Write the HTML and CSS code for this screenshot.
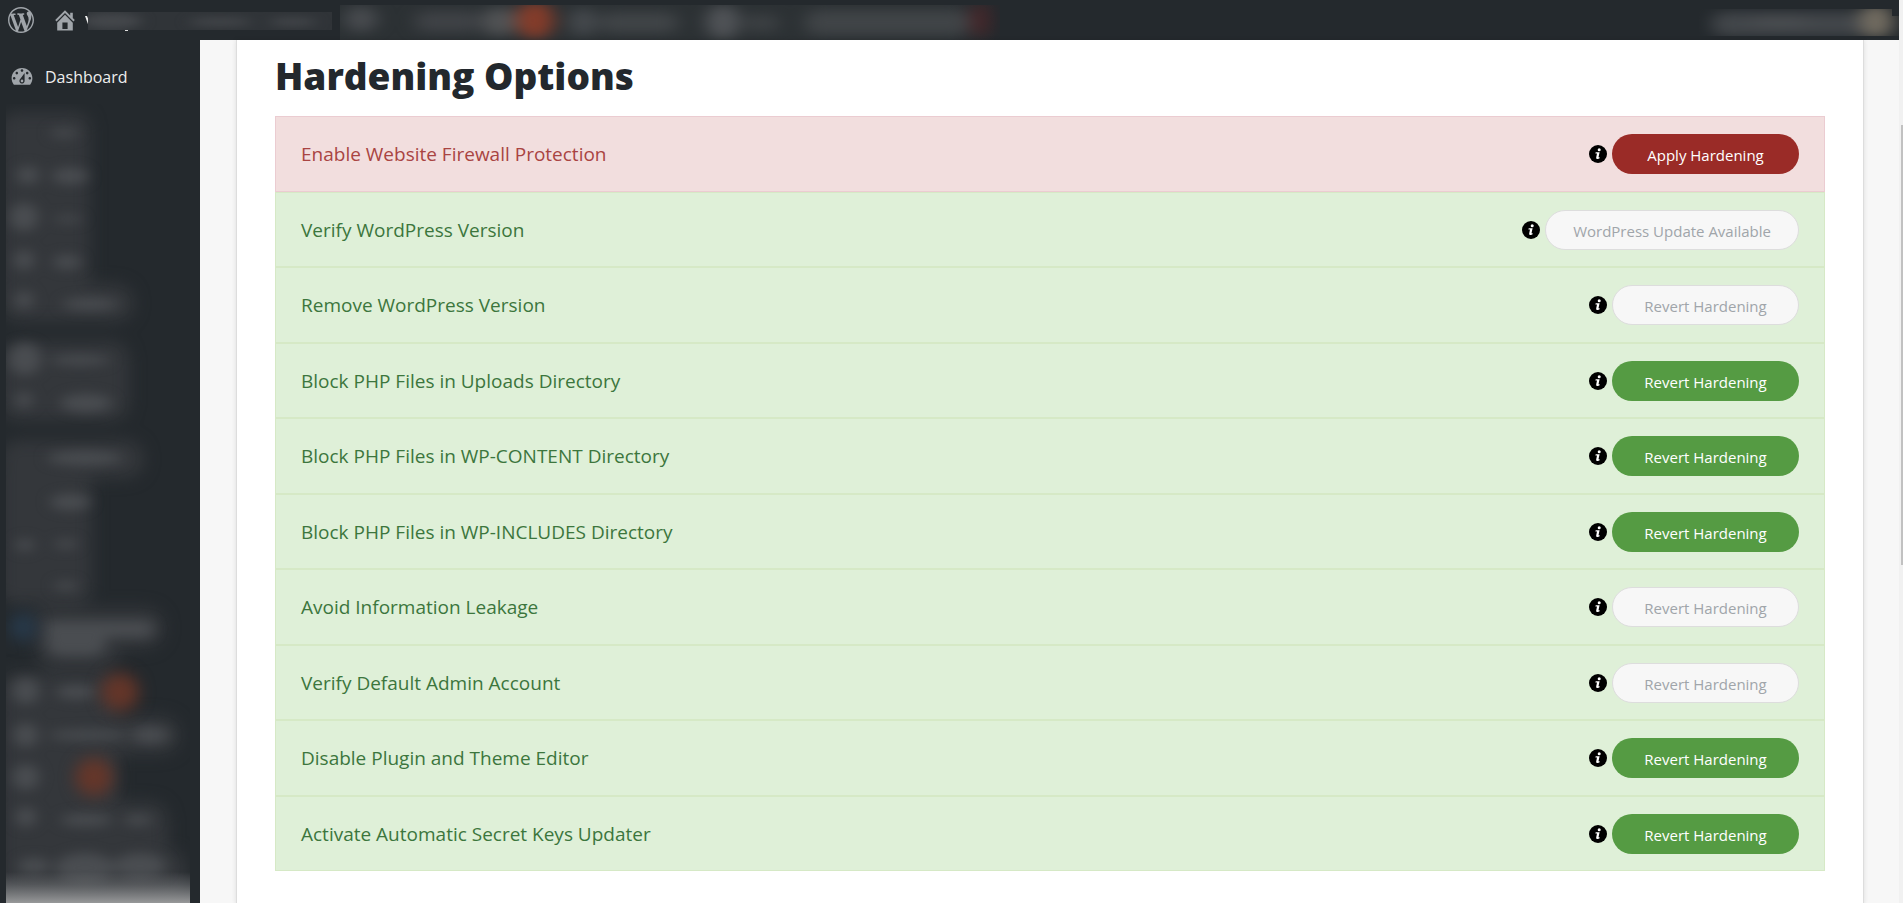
FILE: index.html
```html
<!DOCTYPE html>
<html lang="en">
<head>
<meta charset="utf-8">
<title>Hardening Options</title>
<link rel="stylesheet" href="styles.css">
</head>
<body>
<svg class="defs" aria-hidden="true">
  <symbol id="info" viewBox="0 0 18 18">
    <circle cx="9" cy="9" r="9" fill="#000"/>
    <circle cx="10.2" cy="4.7" r="1.5" fill="#fff"/>
    <path d="M6.7 7.3h3.9L9.5 12.2h1.2l-.3 1.3c-1.2.6-3.6.7-3.2-1.1l.8-3.8H6.4z" fill="#fff"/>
  </symbol>
</svg>
<div class="app">
  <header class="topbar">
    <a class="topbar-link" href="#" aria-label="WordPress">
      <svg class="icon" viewBox="0 0 20 20"><path d="M20 10c0-5.51-4.49-10-10-10C4.48 0 0 4.49 0 10c0 5.52 4.48 10 10 10 5.51 0 10-4.48 10-10zM7.78 15.37L4.37 6.22c.55-.02 1.17-.08 1.17-.08.5-.06.44-1.13-.06-1.11 0 0-1.45.11-2.37.11-.18 0-.37 0-.58-.01C4.12 2.69 6.87 1.11 10 1.11c2.33 0 4.45.87 6.05 2.34-.68-.11-1.65.39-1.65 1.58 0 .74.45 1.36.9 2.1.35.61.55 1.36.55 2.46 0 1.49-1.4 5-1.4 5l-3.03-8.37c.54-.02.82-.17.82-.17.5-.05.44-1.25-.06-1.22 0 0-1.44.12-2.38.12-.87 0-2.33-.12-2.33-.12-.5-.03-.56 1.2-.06 1.22l.92.08 1.26 3.41zM17.41 10c.24-.64.74-1.87.43-4.25.7 1.29 1.05 2.71 1.05 4.25 0 3.29-1.73 6.24-4.4 7.78.97-2.59 1.94-5.2 2.92-7.78zM6.1 18.09C3.12 16.65 1.11 13.53 1.11 10c0-1.3.23-2.48.72-3.59C3.25 10.3 4.67 14.2 6.1 18.09zm4.03-6.63l2.58 6.98c-.86.29-1.76.45-2.71.45-.79 0-1.57-.11-2.29-.33.81-2.38 1.62-4.74 2.42-7.1z"/></svg>
    </a>
    <a class="topbar-link site" href="#" aria-label="Visit site">
      <svg class="icon" viewBox="0 0 20 20"><path d="M16 8.5l1.53 1.53-1.06 1.06L10 4.6l-6.47 6.49-1.06-1.06L10 2.5l4 4v-2h2v4zm-6-2.46l6 5.99V18H4v-5.97zM12 17v-5H8v5h4z"/></svg>
      <svg class="site-name" viewBox="84 0 248 40" aria-hidden="true">
        <defs><filter id="soft" color-interpolation-filters="sRGB"><feGaussianBlur stdDeviation="7 4"/></filter><clipPath id="nameClip"><rect x="88" y="12" width="244" height="18"/></clipPath></defs>
        <path d="M85 16h2l2 5v6z" fill="#eee"/>
        <path d="M125 30h3v1h-3z" fill="#ddd"/>
        <rect x="88" y="12" width="244" height="18" fill="#303438"/>
        <g clip-path="url(#nameClip)"><g filter="url(#soft)" fill="#44474b"><ellipse cx="112" cy="21" rx="30" ry="8"/><ellipse cx="220" cy="22" rx="32" ry="4"/><ellipse cx="293" cy="22" rx="24" ry="4"/></g></g>
      </svg>
    </a>
    <svg class="topbar-blur" viewBox="340 0 660 40" aria-hidden="true">
      <defs>
        <filter id="bar" x="-20%" y="-80%" width="140%" height="260%" color-interpolation-filters="sRGB"><feGaussianBlur stdDeviation="9 6"/></filter>
        <clipPath id="barClip"><rect x="340" y="5" width="660" height="35"/></clipPath>
        <linearGradient id="barFade"><stop offset=".93" stop-color="#2c3134"/><stop offset="1" stop-color="#24292d"/></linearGradient>
      </defs>
      <g clip-path="url(#barClip)">
        <rect x="340" y="5" width="655" height="35" fill="url(#barFade)"/>
        <g filter="url(#bar)">
          <ellipse cx="361" cy="19" rx="16" ry="13" fill="#484b4f"/>
          <rect x="415" y="11" width="65" height="21" rx="10" fill="#3f4246"/>
          <rect x="482" y="8" width="35" height="27" rx="12" fill="#505254"/>
          <circle cx="535" cy="20" r="19" fill="#843c2a"/>
          <circle cx="583" cy="22" r="14" fill="#45494d"/>
          <rect x="600" y="12" width="78" height="21" rx="10" fill="#404447"/>
          <circle cx="723" cy="22" r="17" fill="#505357"/>
          <rect x="745" y="14" width="34" height="18" rx="9" fill="#3c4043"/>
          <rect x="805" y="10" width="165" height="25" rx="12" fill="#404447"/>
          <ellipse cx="980" cy="20" rx="10" ry="18" fill="#452629"/>
        </g>
      </g>
    </svg>
    <svg class="topbar-user" viewBox="1699 0 200 40" aria-hidden="true">
      <defs><clipPath id="userClip"><path d="M1699 9h193v7h7v20h-200z"/></clipPath></defs>
      <g clip-path="url(#userClip)"><g filter="url(#bar)"><rect x="1712" y="12" width="182" height="24" rx="10" fill="#42464a"/><ellipse cx="1780" cy="22" rx="30" ry="5" fill="#4b4e51"/><circle cx="1876" cy="21" r="17" fill="#716b60"/></g></g>
    </svg>
  </header>
  <div class="body">
    <nav class="sidebar">
      <a class="menu-item" href="#">
        <svg class="icon" viewBox="0 0 20 20" aria-hidden="true"><path d="M3.76 16h12.48c1.1-1.37 1.76-3.11 1.76-5 0-4.42-3.58-8-8-8s-8 3.58-8 8c0 1.89.66 3.63 1.76 5zM10 4c.55 0 1 .45 1 1s-.45 1-1 1-1-.45-1-1 .45-1 1-1zM6 6c.55 0 1 .45 1 1s-.45 1-1 1-1-.45-1-1 .45-1 1-1zm8 0c.55 0 1 .45 1 1s-.45 1-1 1-1-.45-1-1 .45-1 1-1zm-5.37 5.55L12 7v6c0 1.1-.9 2-2 2s-2-.9-2-2c0-.57.24-1.08.63-1.45zM4 10c.55 0 1 .45 1 1s-.45 1-1 1-1-.45-1-1 .45-1 1-1zm12 0c.55 0 1 .45 1 1s-.45 1-1 1-1-.45-1-1 .45-1 1-1zm-5 3c0-.55-.45-1-1-1s-1 .45-1 1 .45 1 1 1 1-.45 1-1z"/></svg>
        <span>Dashboard</span>
      </a>
      <svg class="menu-blur" viewBox="6 104 184 799" preserveAspectRatio="xMinYMin slice" aria-hidden="true">
        <defs>
          <filter id="wide" x="-30%" y="-20%" width="160%" height="140%" color-interpolation-filters="sRGB"><feGaussianBlur stdDeviation="8"/></filter>
          <filter id="core" x="-20%" y="-5%" width="140%" height="110%" color-interpolation-filters="sRGB"><feGaussianBlur stdDeviation="7 6"/></filter>
          <linearGradient id="fade" x1="0" y1="0" x2="0" y2="1"><stop offset="0" stop-color="#8e9092" stop-opacity="0"/><stop offset=".4" stop-color="#8e9092" stop-opacity=".35"/><stop offset="1" stop-color="#98999a"/></linearGradient>
        </defs>
        <g filter="url(#wide)" fill="#34373b">
          <rect x="0" y="112" width="90" height="204" rx="16"/>
          <rect x="0" y="284" width="134" height="38" rx="19"/>
          <rect x="0" y="341" width="129" height="80" rx="18"/>
          <rect x="0" y="440" width="144" height="38" rx="19"/>
          <rect x="0" y="460" width="92" height="145" rx="16"/>
          <rect x="30" y="608" width="134" height="40" rx="20"/>
          <rect x="36" y="612" width="84" height="56" rx="18"/>
          <rect x="0" y="672" width="118" height="240" rx="18"/>
          <rect x="20" y="716" width="160" height="38" rx="19"/>
          <rect x="70" y="802" width="98" height="110" rx="18"/>
          <rect x="6" y="850" width="180" height="62" rx="18"/>
        </g>
        <g filter="url(#core)" fill="#4a4d51">
          <ellipse cx="64" cy="133" rx="14" ry="4"/>
          <ellipse cx="28" cy="175" rx="11" ry="9"/><ellipse cx="70" cy="176" rx="18" ry="8"/>
          <circle cx="24" cy="217" r="14"/><ellipse cx="68" cy="219" rx="15" ry="3"/>
          <circle cx="24" cy="260" r="10"/><ellipse cx="67" cy="262" rx="14" ry="7"/>
          <circle cx="24" cy="300" r="9"/><ellipse cx="90" cy="304" rx="28" ry="6"/>
          <circle cx="25" cy="359" r="16"/><ellipse cx="80" cy="360" rx="30" ry="5"/>
          <circle cx="24" cy="400" r="8"/><ellipse cx="86" cy="403" rx="26" ry="9"/>
          <ellipse cx="85" cy="458" rx="38" ry="7"/><ellipse cx="70" cy="502" rx="20" ry="8"/>
          <ellipse cx="25" cy="545" rx="9" ry="6"/><ellipse cx="66" cy="544" rx="12" ry="4"/>
          <ellipse cx="66" cy="586" rx="12" ry="4"/>
          <rect x="45" y="621" width="108" height="16" rx="8"/><rect x="46" y="626" width="60" height="30" rx="15"/>
          <circle cx="26" cy="691" r="13"/><ellipse cx="76" cy="692" rx="20" ry="7"/>
          <circle cx="26" cy="735" r="12"/><ellipse cx="88" cy="735" rx="40" ry="5"/><ellipse cx="150" cy="735" rx="18" ry="8"/>
          <circle cx="26" cy="777" r="13"/><circle cx="26" cy="817" r="10"/>
          <ellipse cx="86" cy="820" rx="26" ry="6"/><ellipse cx="138" cy="820" rx="14" ry="5"/>
          <ellipse cx="34" cy="866" rx="16" ry="8"/><ellipse cx="85" cy="868" rx="30" ry="15"/><ellipse cx="140" cy="866" rx="26" ry="13"/>
        </g>
        <g filter="url(#wide)"><circle cx="23" cy="627" r="14" fill="#27394a"/><circle cx="120" cy="692" r="19" fill="#6a3628" opacity=".9"/><circle cx="94" cy="777" r="19" fill="#6a3628" opacity=".9"/></g>
        <rect x="6" y="872" width="184" height="31" fill="url(#fade)"/>
      </svg>
    </nav>
    <main class="content">
      <section class="panel">
        <h1 class="title">Hardening Options</h1>
        <ul class="options">
          <li class="option danger"><span class="name">Enable Website Firewall Protection</span><svg class="info"><use href="#info"/></svg><button class="btn btn-danger" type="button">Apply Hardening</button></li>
          <li class="option"><span class="name">Verify WordPress Version</span><svg class="info"><use href="#info"/></svg><button class="btn" type="button" disabled>WordPress Update Available</button></li>
          <li class="option"><span class="name">Remove WordPress Version</span><svg class="info"><use href="#info"/></svg><button class="btn" type="button" disabled>Revert Hardening</button></li>
          <li class="option"><span class="name">Block PHP Files in Uploads Directory</span><svg class="info"><use href="#info"/></svg><button class="btn" type="button">Revert Hardening</button></li>
          <li class="option"><span class="name">Block PHP Files in WP-CONTENT Directory</span><svg class="info"><use href="#info"/></svg><button class="btn" type="button">Revert Hardening</button></li>
          <li class="option"><span class="name">Block PHP Files in WP-INCLUDES Directory</span><svg class="info"><use href="#info"/></svg><button class="btn" type="button">Revert Hardening</button></li>
          <li class="option"><span class="name">Avoid Information Leakage</span><svg class="info"><use href="#info"/></svg><button class="btn" type="button" disabled>Revert Hardening</button></li>
          <li class="option"><span class="name">Verify Default Admin Account</span><svg class="info"><use href="#info"/></svg><button class="btn" type="button" disabled>Revert Hardening</button></li>
          <li class="option"><span class="name">Disable Plugin and Theme Editor</span><svg class="info"><use href="#info"/></svg><button class="btn" type="button">Revert Hardening</button></li>
          <li class="option"><span class="name">Activate Automatic Secret Keys Updater</span><svg class="info"><use href="#info"/></svg><button class="btn" type="button">Revert Hardening</button></li>
        </ul>
      </section>
    </main>
  </div>
</div>
<div class="scroll" aria-hidden="true"><div class="thumb"></div></div>
</body>
</html>
```
FILE: styles.css
```css
* { box-sizing: border-box; }

body {
  margin: 0;
  height: 100vh;
  overflow: hidden;
  display: flex;
  background: #f7f7f7;
  font-family: "Segoe UI", "Open Sans", "Noto Sans", sans-serif;
  color: #23282d;
}

.defs { position: absolute; width: 0; height: 0; }

.app { flex: 1; min-width: 0; display: flex; flex-direction: column; }

.topbar {
  flex: none;
  height: 40px;
  display: flex;
  align-items: center;
  padding-left: 8px;
  background: #24292d;
}

.topbar-link { display: flex; align-items: center; color: #eee; }
.site { margin-left: 18px; gap: 6px; }
.icon { flex: none; width: 26px; height: 26px; fill: #a0a5aa; }
.site-name { width: 248px; height: 40px; }
.topbar-blur { width: 660px; height: 40px; margin-left: 8px; }
.topbar-user { width: 200px; height: 40px; margin-left: auto; }

.body { flex: 1; min-height: 0; display: flex; }

.sidebar {
  flex: none;
  width: 200px;
  display: flex;
  flex-direction: column;
  background: #24292d;
}

.menu-item {
  display: flex;
  align-items: flex-start;
  gap: 10px;
  height: 64px;
  padding: 24px 9px 0;
  color: #eee;
  font-size: 16px;
  line-height: 26px;
  text-decoration: none;
}

.menu-blur { flex: 1; min-height: 0; width: 184px; margin-left: 6px; }

.content { flex: 1; min-width: 0; padding: 0 35px 0 36px; display: flex; }

.panel {
  flex: 1;
  min-width: 0;
  margin-bottom: -5px;
  padding: 0 38px;
  border: solid #ddd;
  border-width: 0 1px 1px;
  border-radius: 0 0 6px 6px;
  background: #fff;
  box-shadow: 0 0 5px rgba(0, 0, 0, 0.1);
}

.title {
  margin: 0;
  padding: 10px 0 14px;
  font-size: 37px;
  line-height: 52px;
  font-weight: 800;
}

.options {
  margin: 0;
  padding: 0;
  list-style: none;
  display: grid;
  grid-auto-rows: 1fr;
  min-height: 755px;
}

.option {
  display: flex;
  align-items: center;
  padding: 1px 25px 0;
  border: 1px solid #d6e9c6;
  background: #dff0d8;
  color: #3c763d;
}

.danger { border-color: #ebccd1; background: #f2dede; color: #a94442; }

.name { flex: 1; font-size: 19px; line-height: 28px; }

.info { flex: none; width: 18px; height: 18px; margin-right: 5px; }

.btn {
  min-width: 187px;
  height: 40px;
  padding: 2px 27px 0;
  border: 1px solid transparent;
  border-radius: 20px;
  background: #559b43;
  color: #fff;
  font: inherit;
  font-size: 15px;
}

.btn-danger { background: #9a2b27; }

.btn:disabled { border-color: #ddd; background: #f7f7f7; color: #a0a5aa; }

.scroll { flex: none; width: 4px; padding: 125px 0 0 2px; background: #f1f1f1; }
.thumb { height: 440px; background: #c1c1c1; }
```
